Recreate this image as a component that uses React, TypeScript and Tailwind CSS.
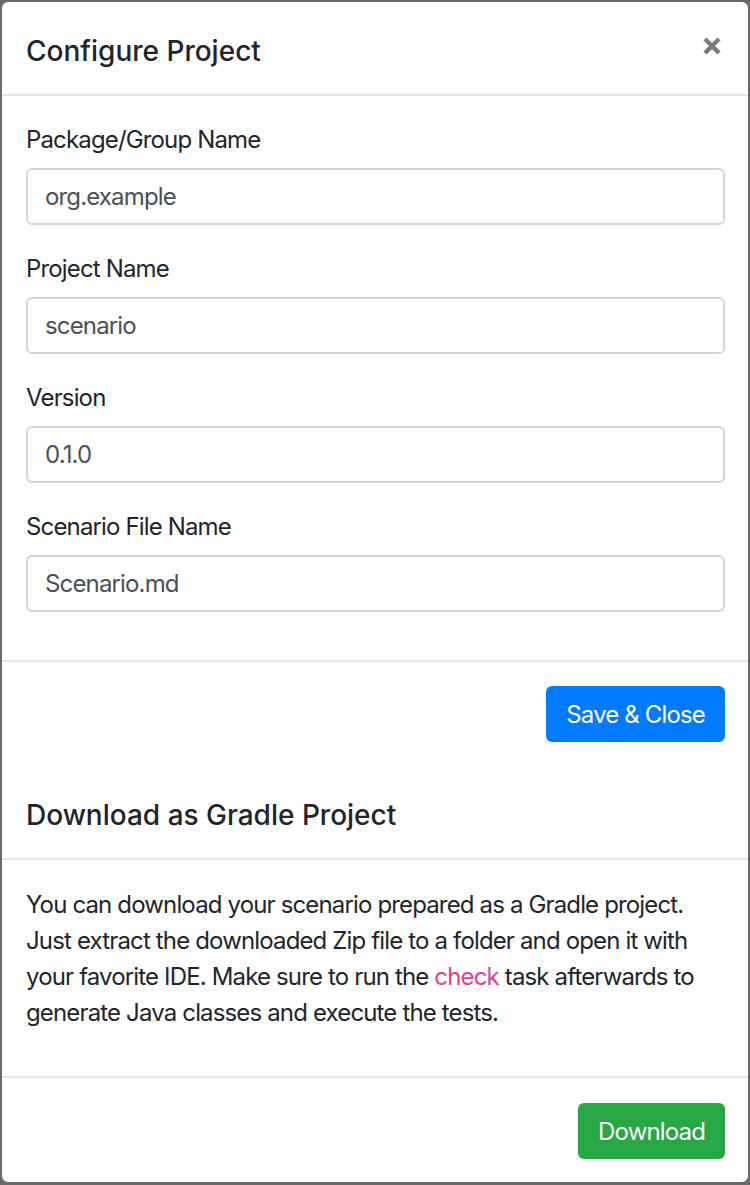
import React from "react";

const font = { fontFamily: "Inter, 'Noto Sans', sans-serif" };

function Field({ label, value }: { label: string; value: string }) {
  return (
    <div className="mb-[24px]">
      <div className="text-[24px] leading-[36px] tracking-[-0.85px] text-[#212529] pt-[2px] mb-[10px]">{label}</div>
      <div className="h-[57px] w-full border-2 border-[#d3d7db] rounded-[6px] flex items-center pl-[17px] pt-[1px] text-[24px] tracking-[-0.85px] text-[#495057]">
        {value}
      </div>
    </div>
  );
}

function Close() {
  return (
    <svg width="20" height="20" viewBox="0 0 20 20" className="mt-[5px] mr-[3px]">
      <path d="M3 3 L17 17 M17 3 L3 17" stroke="#7a7a7a" strokeWidth="4.4" strokeLinecap="butt" />
    </svg>
  );
}

export default function App() {
  return (
    <div className="w-[750px] h-[1185px] bg-[#6a6a6a] pt-[2px] pl-[2px] overflow-hidden" style={font}>
      <div className="w-[746px] bg-white rounded-[6px] overflow-hidden">
        <div className="flex items-start justify-between pl-[24px] pr-[23px] pt-[31px] pb-[25px] border-b-2 border-[#e3e5e8]">
          <div className="text-[28px] leading-[36px] font-medium text-[#212529]">Configure Project</div>
          <div className="-mt-[2px]">
            <Close />
          </div>
        </div>
        <div className="pl-[24px] pr-[23px] pt-[24px] pb-[24px] border-b-2 border-[#e3e5e8]">
          <Field label="Package/Group Name" value="org.example" />
          <Field label="Project Name" value="scenario" />
          <Field label="Version" value="0.1.0" />
          <Field label="Scenario File Name" value="Scenario.md" />
        </div>
        <div className="flex justify-end pr-[23px] pt-[24px] pb-[24px]">
          <button className="h-[56px] px-[20px] pt-[1px] bg-[#007bff] text-white text-[24px] tracking-[-0.85px] rounded-[6px]">Save &amp; Close</button>
        </div>
        <div className="pl-[24px] pr-[23px] pt-[31px] pb-[25px] border-b-2 border-[#e3e5e8]">
          <div className="text-[28px] leading-[36px] font-medium text-[#212529]">Download as Gradle Project</div>
        </div>
        <div className="pl-[24px] pr-[23px] pt-[27px] pb-[24px] border-b-2 border-[#e3e5e8]">
          <p className="text-[24px] leading-[36px] tracking-[-0.85px] text-[#212529] mb-[21px]">
            You can download your scenario prepared as a Gradle project. Just extract the downloaded Zip file to a folder and open it with your favorite IDE. Make sure to run the{" "}
            <span className="text-[#e83e8c]">check</span> task afterwards to generate Java classes and execute the tests.
          </p>
        </div>
        <div className="flex justify-end pr-[23px] pt-[25px] pb-[23px]">
          <button className="h-[56px] px-[20px] pt-[1px] bg-[#28a745] text-white text-[24px] tracking-[-0.85px] rounded-[6px]">Download</button>
        </div>
      </div>
    </div>
  );
}
